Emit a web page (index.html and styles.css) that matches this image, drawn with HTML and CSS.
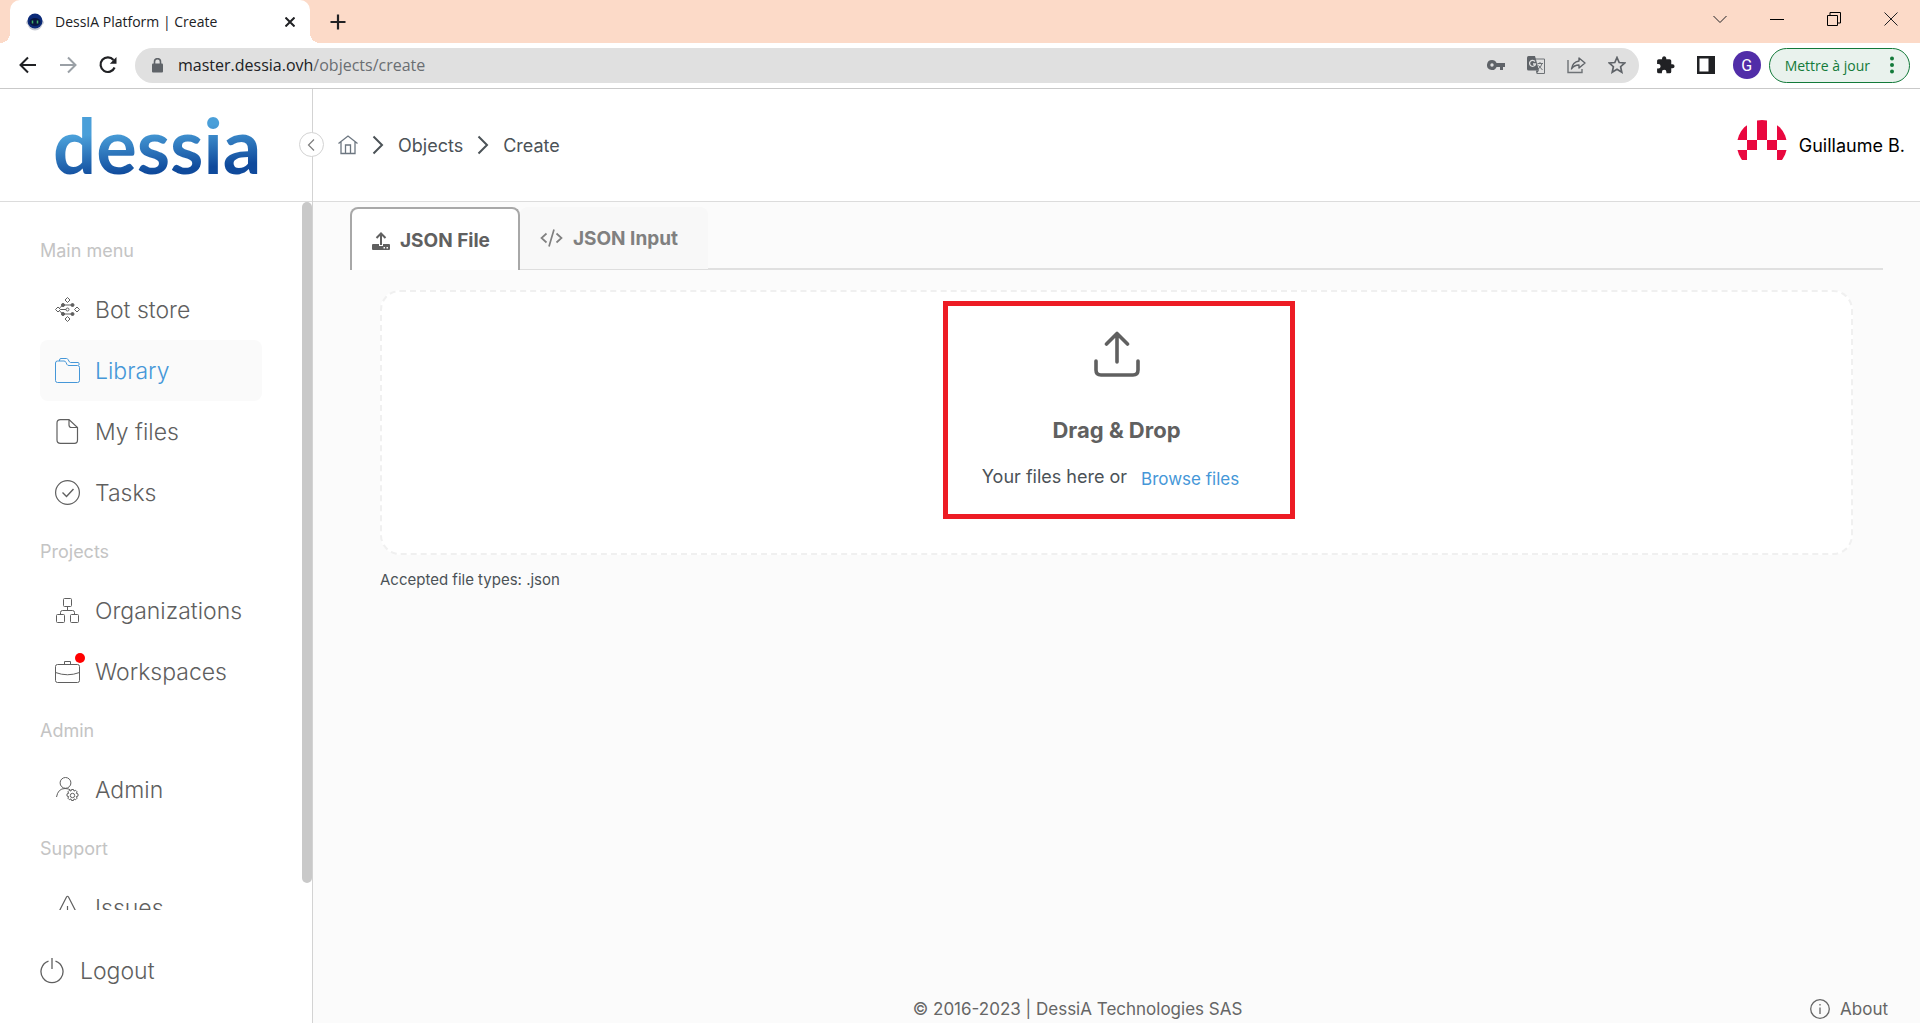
FILE: index.html
```html
<!DOCTYPE html>
<html lang="en">
<head>
<meta charset="utf-8">
<title>DessIA Platform | Create</title>
<link rel="stylesheet" href="styles.css">
</head>
<body>
<header class="browser">
  <div class="tabstrip">
    <div class="browser-tab">
      <svg class="favicon" width="18" height="18" viewBox="0 0 18 18"><ellipse cx="9" cy="9.500" rx="9" ry="4" fill="#c9ccd4"/><circle cx="9" cy="10" r="7.500" fill="#c9ccd4"/><circle cx="9" cy="8" r="7.500" fill="#0b2a78"/><ellipse cx="9" cy="9" rx="5.500" ry="4" fill="#081640"/><path d="M6.500 7.500v3M11.500 7.500v3" stroke="#3fae6a" stroke-width="1.500"/></svg>
      <span class="browser-tab-title">DessIA Platform | Create</span>
      <button class="plain" aria-label="Close tab"><svg width="10" height="10" viewBox="0 0 10 10"><path d="M.5.5l9 9M9.500.5l-9 9" stroke="#202124" stroke-width="2"/></svg></button>
    </div>
    <button class="plain new-tab" aria-label="New tab"><svg width="16" height="16" viewBox="0 0 16 16"><path d="M8 .5v15M.5 8h15" stroke="#202124" stroke-width="2.200"/></svg></button>
    <div class="window-buttons">
      <button class="plain" aria-label="Search tabs"><svg width="14" height="14" viewBox="0 0 14 14"><path d="M.5 4L7 10.500 13.500 4" fill="none" stroke="#202124"/></svg></button>
      <button class="plain" aria-label="Minimize"><svg width="14" height="14" viewBox="0 0 14 14"><path d="M0 7.500h14" stroke="#000"/></svg></button>
      <button class="plain" aria-label="Restore"><svg width="14" height="14" viewBox="0 0 14 14"><path d="M.5 3.500h10v10H.5zM3 3.500V.500h10.500v10.500h-3" fill="none" stroke="#000"/></svg></button>
      <button class="plain" aria-label="Close"><svg width="14" height="14" viewBox="0 0 14 14"><path d="M.5.5l13 13M13.500.5l-13 13" stroke="#202124"/></svg></button>
    </div>
  </div>
  <div class="toolbar">
    <button class="plain" aria-label="Back"><svg width="18" height="18" viewBox="0 0 18 18"><path d="M17 9H2M9 1.500L1.500 9 9 16.500" fill="none" stroke="#202124" stroke-width="2"/></svg></button>
    <button class="plain" aria-label="Forward"><svg width="18" height="18" viewBox="0 0 18 18"><path d="M1 9h15M9 1.500L16.500 9 9 16.500" fill="none" stroke="#9aa0a6" stroke-width="2"/></svg></button>
    <button class="plain" aria-label="Reload"><svg width="18" height="18" viewBox="0 0 18 18"><path d="M15.600 11.500A7.300 7.300 0 1 1 14.500 4" fill="none" stroke="#202124" stroke-width="2.200"/><path d="M17.500 1v6.700h-6.700z" fill="#202124"/></svg></button>
    <div class="address">
      <svg width="11" height="15" viewBox="0 0 11 15"><path d="M2.500 6V3.700a3 3 0 0 1 6 0V6" fill="none" stroke="#5f6368" stroke-width="1.600"/><rect y="5.500" width="11" height="9" rx="1" fill="#5f6368"/></svg>
      <span class="url">master.dessia.ovh<span class="path">/objects/create</span></span>
      <svg width="18" height="18" viewBox="0 0 18 18" fill="#5f6368"><path fill-rule="evenodd" d="M5 4a5 5 0 1 0 4.600 7H13v3h3v-3h2V7H9.600A5 5 0 0 0 5 4zm0 3.300a1.700 1.700 0 1 1 0 3.400 1.700 1.700 0 0 1 0-3.400z"/></svg>
      <svg width="18" height="18" viewBox="0 0 18 18"><path d="M8 3h9.500v14.500H10" fill="none" stroke="#6e7276"/><path d="M0 1.500Q0 0 1.500 0H8l4 14.500H1.500Q0 14.500 0 13z" fill="#5f6368"/><path d="M9 14.500h3L9.500 18z" fill="#5f6368"/><path d="M8 5.500A3 3 0 1 0 8.500 8H6" fill="none" stroke="#e0e0e0" stroke-width="1.300"/><path d="M10.500 7.500H16M13 6v1.500M15 7.500q-1 4-4 5.500M11.500 9.500l4 4.500" fill="none" stroke="#6e7276"/></svg>
      <svg width="19" height="18" viewBox="0 0 19 18"><path d="M1 4v12.500h14V13" fill="none" stroke="#6e7276" stroke-width="1.400"/><path d="M12 2l6 5-6 5V9Q7 9 4.500 13 5.500 6 12 5z" fill="none" stroke="#5f6368" stroke-width="1.400" stroke-linejoin="round"/></svg>
      <svg width="18" height="18" viewBox="0 0 18 18"><path d="M9 1.500l2.200 5 5.500.5-4.100 3.700 1.200 5.500L9 13.300l-4.800 2.900 1.200-5.500L1.300 7l5.500-.5z" fill="none" stroke="#5f6368" stroke-width="1.700"/></svg>
    </div>
    <button class="plain" aria-label="Extensions"><svg width="20" height="20" viewBox="0 0 24 24"><path fill="#202124" d="M21 11h-1.500V7a2 2 0 0 0-2-2h-4V3.500a2.600 2.600 0 0 0-5 0V5h-4a2 2 0 0 0-2 2v3.800H4a2.700 2.700 0 0 1 0 5.400H2.500V20a2 2 0 0 0 2 2h3.800v-1.500a2.700 2.700 0 0 1 5.400 0V22h3.800a2 2 0 0 0 2-2v-4H21a2.500 2.500 0 0 0 0-5z"/></svg></button>
    <button class="plain" aria-label="Side panel"><svg width="18" height="18" viewBox="0 0 18 18"><path fill="#202124" fill-rule="evenodd" d="M0 0h18v18H0zM2.500 2.500v13h9v-13z"/></svg></button>
    <button class="profile" aria-label="Profile">G</button>
    <button class="update">Mettre à jour<svg width="4" height="18" viewBox="0 0 4 18" fill="#137a3a"><circle cx="2" cy="2.500" r="2"/><circle cx="2" cy="9" r="2"/><circle cx="2" cy="15.500" r="2"/></svg></button>
  </div>
</header>
<div class="app">
  <aside class="sidebar">
    <div class="brand">
      <a class="logo" href="#">dessia</a>
      <button class="collapse" aria-label="Collapse menu"><svg width="8" height="12" viewBox="0 0 8 12"><path d="M7 .5L1.500 6 7 11.500" fill="none" stroke="#7d7d7d" stroke-width="1.200"/></svg></button>
    </div>
    <nav class="menu">
      <div class="menu-list">
      <h2 class="group">Main menu</h2>
      <a class="item" href="#"><svg width="25" height="25" viewBox="0 0 25 25" fill="none" stroke="currentColor"><path d="M12.500.5L15 3l-2.500 2.500L10 3zM12.500 19.500L15 22l-2.500 2.500L10 22zM3 10l2.500 2.500L3 15 .5 12.500zM22 10l2.500 2.500L22 15l-2.500-2.500zM5.500 12.500H11M8 8h9M8 17h9M4.500 11L8 8M4.500 14L8 17"/><circle cx="12.500" cy="12.500" r="1.500"/><g fill="currentColor"><circle cx="8" cy="8" r="1.500"/><circle cx="17.500" cy="8" r="1.500"/><circle cx="8" cy="17" r="1.500"/><circle cx="17.500" cy="17" r="1.500"/></g></svg>Bot store</a>
      <a class="item active" href="#"><svg width="25" height="25" viewBox="0 0 25 25" fill="none" stroke="currentColor"><path d="M.5 5q0-2 2-2H9q1.500 0 2 1.500l1 2q.5 1 2 1h8.500q2 0 2 2V22.500q0 2-2 2h-20q-2 0-2-2z"/><path d="M4.500 3V2q0-1.500 1.500-1.500h5.500q1 0 1.500 1L14.500 4q.3.500 1 .5H23q1 0 1 1V7"/></svg>Library</a>
      <a class="item" href="#"><svg width="25" height="25" viewBox="0 0 25 25" fill="none" stroke="currentColor" stroke-width="1.200"><path d="M14 .6H5.500Q2 .6 2 4v17q0 3.400 3.500 3.400h14q3 0 3-3.400V8.500zM14 .6V6q0 2.500 2.500 2.500h6"/></svg>My files</a>
      <a class="item" href="#"><svg width="25" height="25" viewBox="0 0 25 25" fill="none" stroke="currentColor" stroke-width="1.200"><circle cx="12.500" cy="12.500" r="11.900"/><path d="M7.500 12.500l4 4 7-7.500" stroke-width="1.400"/></svg>Tasks</a>
      <h2 class="group">Projects</h2>
      <a class="item" href="#"><svg width="25" height="25" viewBox="0 0 25 25" fill="none" stroke="currentColor"><rect x="8.500" y=".5" width="8" height="8" rx="1"/><rect x="1.500" y="16.500" width="8" height="8" rx="1"/><rect x="15.500" y="16.500" width="8" height="8" rx="1"/><path d="M12.500 8.500v4M5.500 16.500v-2q0-2 2-2h10q2 0 2 2v2"/></svg>Organizations</a>
      <a class="item" href="#"><span class="badged"><svg width="25" height="25" viewBox="0 0 25 25" fill="none" stroke="currentColor"><rect x=".5" y="5.500" width="24" height="18" rx="2"/><path d="M9.500 5.500v-3h6v3M.5 13.500q12 4.500 24 0"/></svg><span class="dot"></span></span>Workspaces</a>
      <h2 class="group">Admin</h2>
      <a class="item" href="#"><svg width="25" height="25" viewBox="0 0 25 25" fill="none" stroke="currentColor"><circle cx="10.500" cy="5.900" r="5.400"/><path d="M1.500 20Q3 11.500 10 11.500q3.500 0 5.500 1.500"/><circle cx="17.500" cy="18.500" r="2.200"/><path d="M16.500 12.500h2l.5 1.600 1.600-.8 1.500 1.500-.8 1.500 1.700.6v2.200l-1.700.5.8 1.600-1.500 1.500-1.600-.8-.5 1.600h-2l-.5-1.600-1.600.8-1.500-1.500.8-1.600-1.700-.5v-2.200l1.700-.6-.8-1.500 1.500-1.500 1.600.8z"/></svg>Admin</a>
      <h2 class="group">Support</h2>
      <a class="item" href="#"><svg width="25" height="25" viewBox="0 0 25 25" fill="none" stroke="currentColor" stroke-width="1.200"><path d="M1 22.500L11.500 2q1-1.500 2 0L24 22.500q0 1.500-1 1.500H2q-1 0-1-1.500zM12.500 11v6M12.500 19.500v1.500"/></svg>Issues</a>
      </div>
    </nav>
    <a class="logout" href="#"><svg width="24" height="26" viewBox="0 0 24 26" fill="none" stroke="currentColor" stroke-width="1.300"><path d="M12 0v11M8.500 3.200a11 11 0 1 0 7 0"/></svg>Logout</a>
  </aside>
  <div class="content">
    <header class="topbar">
      <nav class="crumbs">
        <a href="#" aria-label="Home"><svg width="20" height="20" viewBox="0 0 20 20" fill="none" stroke="#6c7680" stroke-width="1.300"><path d="M.5 8.500L10 1l9.500 7.500M3 7v11.500h14V7M7.500 18.500V10h5v8.500"/></svg></a>
        <svg width="12" height="20" viewBox="0 0 12 20"><path d="M1.500 1.500L10 10l-8.500 8.500" fill="none" stroke="#4b5257" stroke-width="2"/></svg>
        <a href="#">Objects</a>
        <svg width="12" height="20" viewBox="0 0 12 20"><path d="M1.500 1.500L10 10l-8.500 8.500" fill="none" stroke="#4b5257" stroke-width="2"/></svg>
        <a href="#">Create</a>
      </nav>
      <a class="user" href="#"><svg width="50" height="50" viewBox="0 0 50 50" fill="#e9083f"><clipPath id="round"><circle cx="25" cy="25" r="25"/></clipPath><path clip-path="url(#round)" d="M0 5h10v15H0zM20 0h10v20H20zM40 5h10v15H40zM10 20h10v10H10zM30 20h10v10H30zM0 30h10v10H0zM40 30h10v10H40z"/></svg>Guillaume B.</a>
    </header>
    <main class="main">
      <div class="tabs" role="tablist">
        <button class="tab selected" role="tab" aria-selected="true"><svg width="18" height="18" viewBox="0 0 18 18"><path d="M9 13V2M4.500 6L9 1.500 13.500 6" fill="none" stroke="currentColor" stroke-width="2"/><path fill="currentColor" fill-rule="evenodd" d="M1 12h6v2h4v-2h6q1 0 1 1v4q0 1-1 1H1q-1 0-1-1v-4q0-1 1-1zm10.500 3v1.500H13V15zm3 0v1.500H16V15z"/></svg>JSON File</button>
        <button class="tab" role="tab" aria-selected="false"><svg width="23" height="18" viewBox="0 0 23 18" fill="none" stroke="currentColor" stroke-width="1.700"><path d="M6.500 4.500L1.500 9l5 4.500M16.500 4.500l5 4.500-5 4.500M14 .5L9 17.500"/></svg>JSON Input</button>
      </div>
      <section class="dropzone">
        <svg width="46" height="46" viewBox="0 0 46 46" fill="none" stroke="currentColor" stroke-width="3.600" stroke-linecap="round" stroke-linejoin="round"><path d="M23 31V2.500M12.500 13L23 2.500 33.500 13M2 30v9q0 5 5 5h32q5 0 5-5v-9"/></svg>
        <h1>Drag &amp; Drop</h1>
        <div class="hint"><span>Your files here or</span><button class="browse">Browse files</button></div>
        <div class="highlight"></div>
      </section>
      <p class="accepted">Accepted file types: .json</p>
    </main>
    <footer class="footer">
      <span class="copyright">© 2016-2023 | DessiA Technologies SAS</span>
      <a href="#"><svg width="20" height="20" viewBox="0 0 20 20" fill="none" stroke="currentColor" stroke-width="1.300"><circle cx="10" cy="10" r="9.300"/><path d="M10 8.500V15M10 5v1.600"/></svg>About</a>
    </footer>
  </div>
</div>
</body>
</html>
```
FILE: styles.css
```css
* { box-sizing: border-box; }
body {
  margin: 0;
  height: 100vh;
  display: flex;
  flex-direction: column;
  overflow: hidden;
  font-family: Inter, "Liberation Sans", sans-serif;
  font-size: 18px;
  color: #4b5257;
  background: #fff;
}
a { color: inherit; text-decoration: none; }
button { font: inherit; color: inherit; cursor: pointer; }
svg { display: block; flex: none; }
.plain { display: flex; padding: 0; border: 0; background: none; }

/* Browser chrome */
.browser {
  flex: none;
  font-family: "Open Sans", "Noto Sans", sans-serif;
  border-bottom: 1px solid #c9c9c9;
}
.tabstrip {
  height: 43px;
  display: flex;
  align-items: center;
  padding-left: 10px;
  background: #fcdac8;
}
.browser-tab {
  position: relative;
  width: 300px;
  height: 43px;
  display: flex;
  align-items: center;
  gap: 11px;
  padding: 0 15px 0 16px;
  border-radius: 10px 10px 0 0;
  background: #fff;
  font-size: 14px;
  color: #202124;
}
.browser-tab::before,
.browser-tab::after {
  content: "";
  position: absolute;
  bottom: 0;
  width: 10px;
  height: 10px;
}
.browser-tab::before { left: -10px; background: radial-gradient(circle at 0 0, #fcdac8 10px, #fff 10px); }
.browser-tab::after { right: -10px; background: radial-gradient(circle at 100% 0, #fcdac8 10px, #fff 10px); }
.browser-tab-title { flex: 1; white-space: nowrap; }
.new-tab { margin-left: 20px; }
.window-buttons { display: flex; gap: 43px; margin: 0 22px 6px auto; }
.toolbar {
  height: 45px;
  display: flex;
  align-items: center;
  gap: 22px;
  padding: 0 10px 1px 19px;
}
.address {
  flex: 1;
  height: 35px;
  display: flex;
  align-items: center;
  gap: 22px;
  margin-left: -4px;
  margin-right: -6px;
  padding: 0 13px 0 17px;
  border-radius: 18px;
  background: #e0e0e0;
}
.url { flex: 1; margin-left: -7px; font-size: 16px; color: #202124; }
.path { color: #6a6e72; }
.profile {
  width: 28px;
  height: 28px;
  margin: 0 -14px 0 -4px;
  padding: 0;
  border: 0;
  border-radius: 50%;
  background: #512da8;
  color: #fff;
  font-family: Roboto, sans-serif;
  font-size: 16px;
}
.update {
  height: 35px;
  display: flex;
  align-items: center;
  gap: 20px;
  padding: 0 15px;
  border: 1px solid #137a3a;
  border-radius: 18px;
  background: #e9f2ed;
  color: #137a3a;
  font-size: 14px;
}

/* Application */
.app { flex: 1; min-height: 0; display: flex; }
.sidebar {
  width: 313px;
  flex: none;
  display: flex;
  flex-direction: column;
  border-right: 1px solid #d3d3d3;
}
.brand {
  position: relative;
  height: 113px;
  flex: none;
  display: flex;
  align-items: center;
  padding-left: 53px;
  border-bottom: 1px solid #dcdcdc;
}
.logo {
  font-family: Lato, sans-serif;
  font-size: 76px;
  line-height: 88px;
  font-weight: 700;
  background: linear-gradient(175deg, #4a9fd9 35%, #0f4a9c 75%);
  -webkit-background-clip: text;
  background-clip: text;
  color: transparent;
}
.collapse {
  position: absolute;
  right: -12px;
  top: 43px;
  width: 25px;
  height: 25px;
  display: flex;
  align-items: center;
  justify-content: center;
  padding: 0 2px 0 0;
  border: 1px solid #d3d3d3;
  border-radius: 50%;
  background: #fff;
  z-index: 1;
}
.menu {
  flex: 1;
  min-height: 0;
  overflow: hidden;
  display: flex;
  color: #5f5f5f;
}
.menu-list { flex: 1; padding: 20px 50px 0 40px; }
.menu::after {
  content: "";
  width: 10px;
  height: 681px;
  max-height: 97%;
  margin-left: -10px;
  border-radius: 5px;
  background: #c9c9c9;
}
.group {
  margin: 0;
  font-size: 18px;
  line-height: 57px;
  font-weight: 400;
  color: #c4c4c4;
}
.item {
  height: 61px;
  display: flex;
  align-items: center;
  gap: 15px;
  padding: 0 15px;
  border-radius: 8px;
  font-size: 23px;
  font-weight: 300;
}
.active { background: #fafafa; color: #4597d8; }
.badged { position: relative; }
.dot {
  position: absolute;
  top: -6px;
  right: -5px;
  width: 10px;
  height: 10px;
  border-radius: 50%;
  background: #f00;
}
.logout {
  display: flex;
  align-items: center;
  gap: 16px;
  height: 113px;
  flex: none;
  padding: 8px 40px 0;
  font-size: 23px;
  font-weight: 300;
  color: #5f5f5f;
}
.content {
  flex: 1;
  min-width: 0;
  display: flex;
  flex-direction: column;
}
.topbar {
  height: 113px;
  flex: none;
  display: flex;
  align-items: center;
  justify-content: space-between;
  padding: 0 15px 0 25px;
  border-bottom: 1px solid #dcdcdc;
}
.crumbs { display: flex; align-items: center; gap: 14px; }
.user { display: flex; align-items: center; gap: 12px; color: #000; }
.main { flex: 1; padding: 5px 37px 0; background: #fbfbfb; }
.tabs {
  height: 63px;
  display: flex;
  background: linear-gradient(#e0e0e0, #e0e0e0) bottom / 100% 2px no-repeat;
}
.tab {
  display: flex;
  align-items: center;
  gap: 10px;
  padding: 0 30px 0 20px;
  border: 0;
  border-bottom: 1px solid #dedede;
  border-radius: 8px 8px 0 0;
  background: #f8f8f8;
  color: #808080;
  font-size: 19px;
  font-weight: 700;
}
.selected {
  padding: 2px 28px 0 20px;
  border: 2px solid #a8a8a8;
  border-bottom: 0;
  background: #fff;
  color: #606060;
}
.dropzone {
  position: relative;
  height: 265px;
  margin: 20px 30px 0;
  display: flex;
  flex-direction: column;
  align-items: center;
  padding-top: 39px;
  border: 2px dashed #f0f0f0;
  border-radius: 20px;
  background: #fff;
  color: #606060;
}
.dropzone h1 { margin: 40px 0 0; font-size: 22px; line-height: 26px; }
.hint { display: flex; align-items: center; gap: 14px; margin-top: 21px; padding-right: 12px; color: #4b5257; }
.browse { padding: 5px 0 0; border: 0; background: none; color: #4597d8; font-size: 17px; }
.highlight {
  position: absolute;
  top: 9px;
  left: 50%;
  width: 352px;
  height: 218px;
  margin-left: -174px;
  border: 5px solid #ed1c24;
  pointer-events: none;
}
.accepted { margin: 15px 30px 0; font-size: 15px; line-height: 20px; }
.footer {
  flex: none;
  display: flex;
  align-items: center;
  padding: 0 32px 2px;
  background: #fbfbfb;
  color: #666;
  font-size: 17px;
  line-height: 24px;
}
.copyright { flex: 1; text-align: center; }
.footer a { display: flex; align-items: center; gap: 10px; }
```
